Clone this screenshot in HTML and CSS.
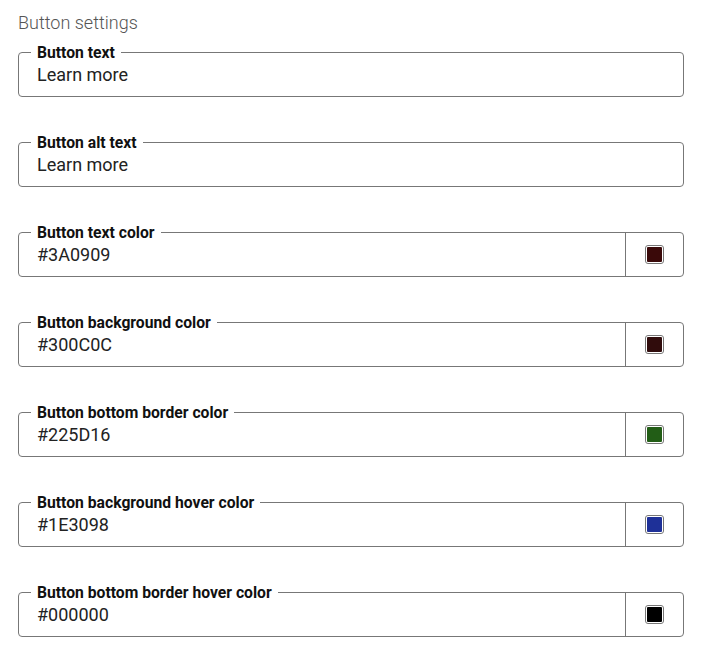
FILE: index.html
```html
<!DOCTYPE html>
<html>
<head>
<meta charset="utf-8">
<link rel="stylesheet" href="styles.css">
</head>
<body>
<div class="panel">
  <div class="title">Button settings</div>
  <div class="fields">
    <div class="field">
      <span class="label">Button text</span>
      <div class="value">Learn more</div>
    </div>
    <div class="field">
      <span class="label">Button alt text</span>
      <div class="value">Learn more</div>
    </div>
    <div class="field">
      <span class="label">Button text color</span>
      <div class="value">#3A0909</div>
      <div class="swatch-cell"><span class="swatch"><span class="fill" style="background:#3A0909"></span></span></div>
    </div>
    <div class="field">
      <span class="label">Button background color</span>
      <div class="value">#300C0C</div>
      <div class="swatch-cell"><span class="swatch"><span class="fill" style="background:#300C0C"></span></span></div>
    </div>
    <div class="field">
      <span class="label">Button bottom border color</span>
      <div class="value">#225D16</div>
      <div class="swatch-cell"><span class="swatch"><span class="fill" style="background:#225D16"></span></span></div>
    </div>
    <div class="field">
      <span class="label">Button background hover color</span>
      <div class="value">#1E3098</div>
      <div class="swatch-cell"><span class="swatch"><span class="fill" style="background:#1E3098"></span></span></div>
    </div>
    <div class="field">
      <span class="label">Button bottom border hover color</span>
      <div class="value">#000000</div>
      <div class="swatch-cell"><span class="swatch"><span class="fill" style="background:#000000"></span></span></div>
    </div>
  </div>
</div>
</body>
</html>
```
FILE: styles.css
```css
html, body {
  margin: 0;
  padding: 0;
  background: #fff;
}
body {
  font-family: Roboto, "Liberation Sans", sans-serif;
}
.panel {
  padding: 12px 20px 0 18px;
}
.title {
  font-size: 18px;
  font-weight: 300;
  line-height: 22px;
  color: #555;
  margin-bottom: 18px;
}
.fields {
  display: flex;
  flex-direction: column;
  gap: 45px;
}
.field {
  position: relative;
  display: flex;
  align-items: stretch;
  height: 45px;
  box-sizing: border-box;
  border: 1px solid #777;
  border-radius: 4px;
}
.label {
  position: absolute;
  left: 12px;
  top: -9px;
  padding: 0 6px 0 6px;
  background: #fff;
  font-size: 15.7px;
  font-weight: 700;
  line-height: 18px;
  color: #111;
}
.value {
  flex: 1;
  display: flex;
  align-items: center;
  padding-left: 18px;
  font-size: 18px;
  color: #222;
}
.swatch-cell {
  width: 57px;
  border-left: 1px solid #777;
  display: flex;
  align-items: center;
  justify-content: center;
}
.swatch {
  width: 19px;
  height: 19px;
  box-sizing: border-box;
  border: 1px solid #777;
  border-radius: 3px;
  padding: 1px;
  background: #fff;
  display: flex;
}
.fill {
  flex: 1;
  border-radius: 1px;
}
```
